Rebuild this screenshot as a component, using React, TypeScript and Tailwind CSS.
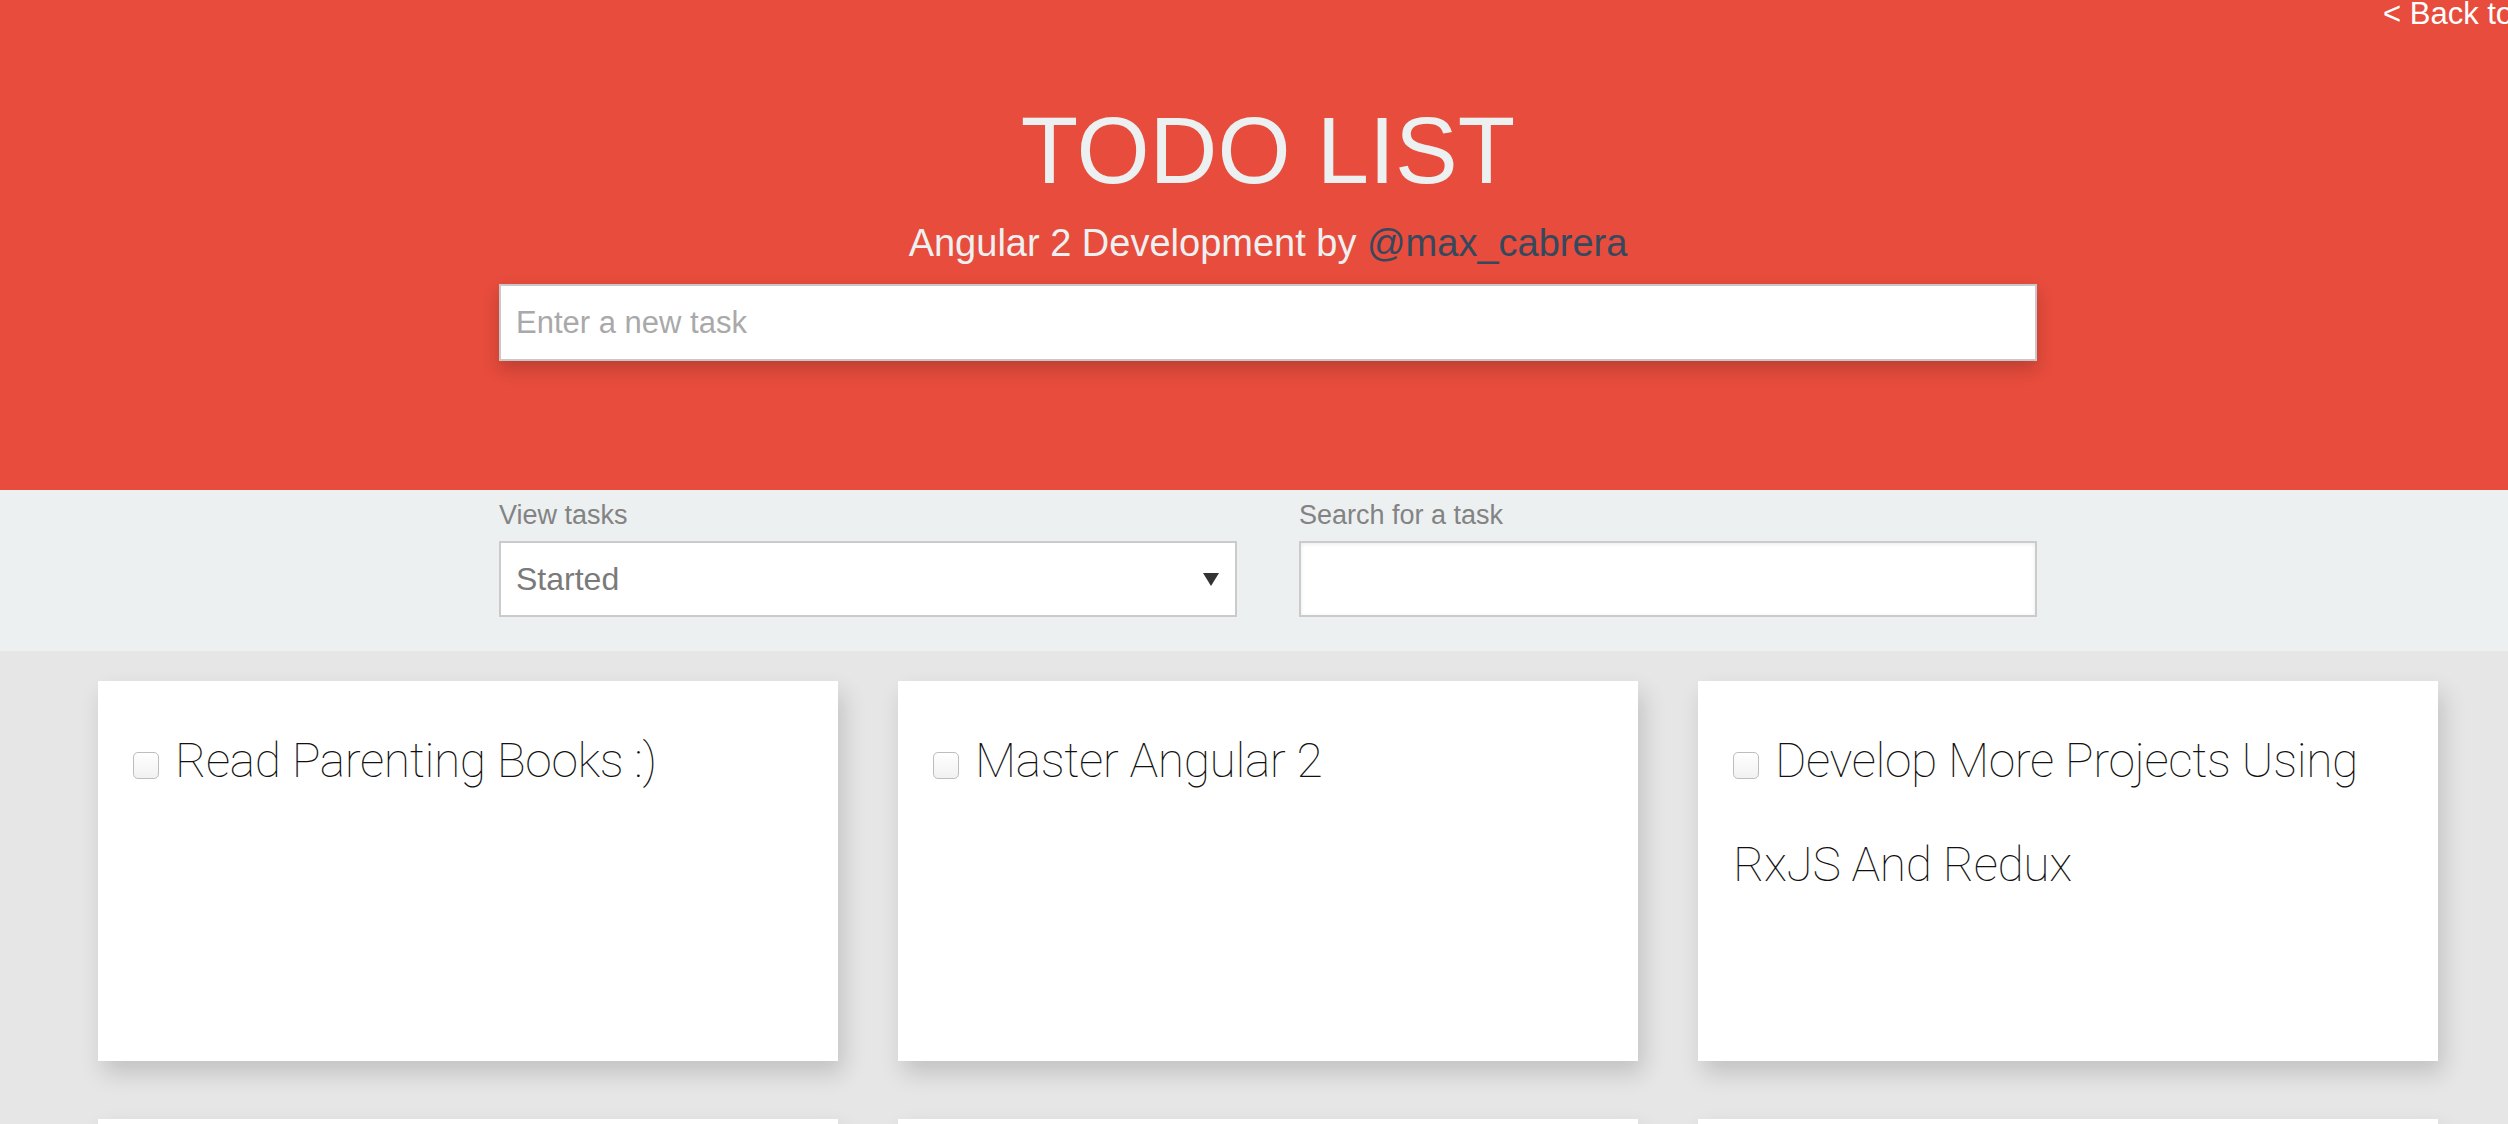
const tasks = [
  "Read Parenting Books :)",
  "Master Angular 2",
  "Develop More Projects Using RxJS And Redux",
  "Learn TypeScript Decorators",
  "Write Unit Tests",
  "Publish A New Blog Post",
];

function TaskCard({ title }: { title: string }) {
  return (
    <div className="h-[380px] bg-white px-[35px] pt-[28px] shadow-[5px_12px_22px_rgba(0,0,0,0.16)]">
      <p className="font-['Roboto','Helvetica_Neue',sans-serif] text-[48px] font-thin leading-[104px] tracking-[-0.4px] text-[#111]">
        <span className="mr-[16px] inline-block h-[27px] w-[26px] rounded-[5px] border border-[#bdbdbd] bg-gradient-to-b from-white to-[#f1f1f1] align-[-2px]" />
        {title}
      </p>
    </div>
  );
}

export default function App() {
  return (
    <div className="min-h-screen w-full overflow-hidden bg-[#e6e6e6] font-['Liberation_Sans',Arial,sans-serif]">
      <div className="w-[2536px]">
        {/* Header */}
        <header className="relative flex h-[490px] flex-col items-center bg-[#e74c3c]">
          <a href="#" className="absolute left-[2383px] top-[-2px] whitespace-nowrap text-[31px] leading-none text-white">
            &lt; Back to projects
          </a>
          <h1 className="mt-[104px] text-[94px] leading-none text-[#ecf0f1]">TODO LIST</h1>
          <p className="mt-[26px] text-[38px] leading-none text-[#ecf0f1]">
            Angular 2 Development by <a href="#" className="text-[#34495e]">@max_cabrera</a>
          </p>
          <input
            type="text"
            placeholder="Enter a new task"
            className="mt-[22px] h-[77px] w-[1538px] border-2 border-[#c8c8c8] bg-white px-[15px] text-[31px] text-[#555] shadow-[0_8px_16px_rgba(0,0,0,0.18)] outline-none placeholder:text-[#a9a9a9]"
          />
        </header>

        {/* Filters */}
        <section className="bg-[#ecf0f1] pb-[34px] pt-[12px]">
          <div className="mx-auto grid w-[1538px] grid-cols-2 gap-x-[62px]">
            <div>
              <label className="block text-[27px] leading-none text-[#838383]">View tasks</label>
              <div className="mt-[12px] flex h-[76px] items-center justify-between border-2 border-[#cbcbcb] bg-white pl-[15px] pr-[16px]">
                <span className="text-[32px] text-[#7a7a7a]">Started</span>
                <svg width="16" height="13" viewBox="0 0 16 13">
                  <path d="M0 0 L16 0 L8 13 Z" fill="#333" />
                </svg>
              </div>
            </div>
            <div>
              <label className="block text-[27px] leading-none text-[#838383]">Search for a task</label>
              <input
                type="text"
                className="mt-[12px] block h-[76px] w-full border-2 border-[#cbcbcb] bg-white px-[15px] text-[30px] shadow-[inset_0_1px_4px_rgba(0,0,0,0.08)] outline-none"
              />
            </div>
          </div>
        </section>

        {/* Task cards */}
        <main className="grid grid-cols-3 gap-x-[60px] gap-y-[58px] px-[98px] pb-[60px] pt-[30px]">
          {tasks.map((t) => (
            <TaskCard key={t} title={t} />
          ))}
        </main>
      </div>
    </div>
  );
}
